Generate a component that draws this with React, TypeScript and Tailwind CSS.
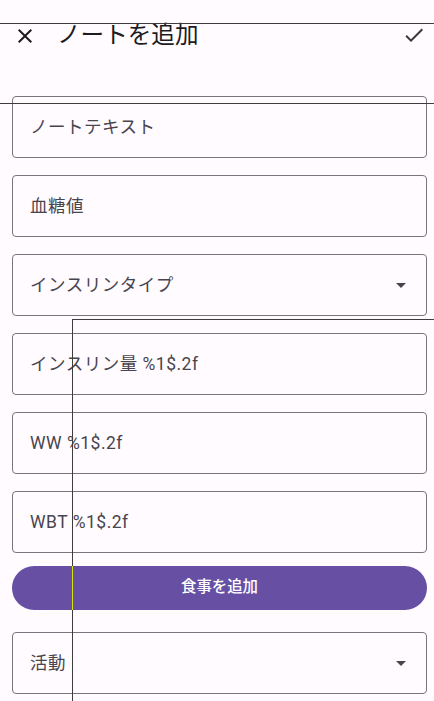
import React from "react";

const FONT = "font-['Roboto','Noto_Sans_CJK_JP',sans-serif]";

function Field({ label, dropdown, className = "" }: { label: string; dropdown?: boolean; className?: string }) {
  return (
    <div
      className={`h-[62px] w-full rounded-[4px] border border-[#79747E] flex items-center pl-[17px] pr-[13px] ${className}`}
    >
      <span className="flex-1 pt-[2px] text-[17.5px] leading-none tracking-[0.5px] text-[#49454F] whitespace-nowrap">
        {label}
      </span>
      {dropdown && (
        <svg width="24" height="24" viewBox="0 0 24 24" className="shrink-0">
          <path d="M7 10l5 5 5-5z" fill="#49454F" />
        </svg>
      )}
    </div>
  );
}

export default function App() {
  return (
    <div className={`relative h-[701px] w-full overflow-hidden bg-[#FFFBFE] ${FONT}`}>
      {/* top bar */}
      <div className="h-[72px] flex items-center pl-[13px] pr-[8px]">
        <svg width="24" height="24" viewBox="0 0 24 24" className="shrink-0">
          <path
            d="M19 6.41 17.59 5 12 10.59 6.41 5 5 6.41 10.59 12 5 17.59 6.41 19 12 13.41 17.59 19 19 17.59 13.41 12z"
            fill="#1C1B1F"
          />
        </svg>
        <span className="ml-[20px] flex-1 text-[23.6px] leading-none text-[#1C1B1F] whitespace-nowrap">ノートを追加</span>
        <svg width="24" height="24" viewBox="0 0 24 24" className="shrink-0 -mt-[2px]">
          <path d="M9 16.17 4.83 12l-1.42 1.41L9 19 21 7l-1.41-1.41z" fill="#3a373d" />
        </svg>
      </div>

      {/* form */}
      <div className="flex flex-col px-[12px] pr-[7px] pt-[24px]">
        <Field label="ノートテキスト" />
        <Field label="血糖値" className="mt-[17px]" />
        <Field label="インスリンタイプ" dropdown className="mt-[17px]" />
        <Field label="インスリン量 %1$.2f" className="mt-[17px]" />
        <Field label="WW %1$.2f" className="mt-[17px]" />
        <Field label="WBT %1$.2f" className="mt-[17px]" />
        <button className="mt-[13px] h-[44px] w-full rounded-full bg-[#6750A4] text-white text-[15.4px] font-medium flex items-center justify-center">
          食事を追加
        </button>
        <Field label="活動" dropdown className="mt-[22px]" />
      </div>

      {/* overlay guide lines */}
      <div className="absolute left-0 right-0 top-[23px] h-px bg-[#3d3d3d]" />
      <div className="absolute left-0 right-0 top-[103px] h-px bg-[#3d3d3d]" />
      <div className="absolute left-[72px] right-0 top-[319px] h-px bg-[#3d3d3d]" />
      <div className="absolute left-[72px] top-[319px] bottom-0 w-px bg-[#3d3d3d]" />
      <div className="absolute left-[72px] top-[566px] h-[44px] w-px bg-[#d8e600]" />
    </div>
  );
}
